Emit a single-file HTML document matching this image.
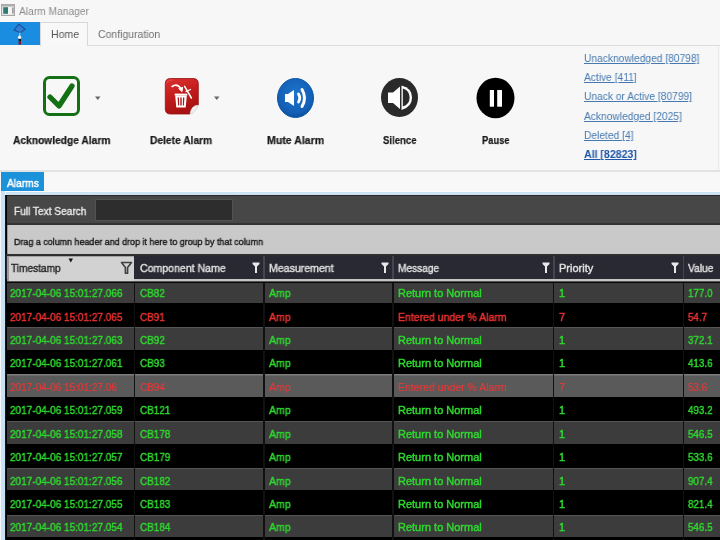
<!DOCTYPE html>
<html><head><meta charset="utf-8">
<style>
*{margin:0;padding:0;box-sizing:border-box}
html,body{width:720px;height:540px;overflow:hidden;background:#f7f7f7;font-family:"Liberation Sans",sans-serif}
.a{position:absolute;white-space:nowrap}
.t{position:absolute;white-space:nowrap;transform-origin:0 0;will-change:transform}
#title{left:19px;top:4.5px;font-size:11px;color:#8c8c8c;transform:scaleX(0.93)}
#tabbar .blue{position:absolute;left:0;top:22px;width:40px;height:22.6px;background:#1a8de0}
#home{position:absolute;left:40px;top:22px;width:48px;height:24px;border:1px solid #d8d8d8;border-bottom:none;background:#f8f8f8}
#tabline{position:absolute;left:88px;top:45px;width:632px;height:1px;background:#dcdcdc}
.lbl{font-size:11px;font-weight:bold;color:#1a1a1a;-webkit-text-stroke:0.25px #1a1a1a}
.link{font-size:11px;color:#4679b0;text-decoration:underline}
#ribbonline{position:absolute;left:0;top:169.5px;width:720px;height:2.2px;background:#e3e3e3}
#alarmsTab{position:absolute;left:1px;top:172px;width:43.3px;height:19px;background:#1c92da;color:#fff;font-size:11px}
#tabstrip{position:absolute;left:0;top:171.7px;width:720px;height:20.3px;background:#f8f8f8}
#bluebar{position:absolute;left:0;top:191px;width:720px;height:4px;background:#cbe3f3;border-top:1px solid #fdfdfd}
#bluel{position:absolute;left:0.8px;top:191px;width:4px;height:349px;background:#c9e1f2}
#grid{position:absolute;left:5.4px;top:195px;width:715px;height:345px;background:#000;border-left:1.6px solid #161616}
#gline{position:absolute;left:6px;top:253.8px;width:714px;height:2.2px;background:#2e2e2e}
#search{position:absolute;left:6.8px;top:195px;width:714px;height:30.3px;background:#474747;border-top:1.5px solid #2a2a2a;border-bottom:2px solid #333}
#input{position:absolute;left:95.2px;top:199px;width:138px;height:22px;background:#2d2d2d;border:1px solid #525252}
#group{position:absolute;left:6.6px;border-left:1px solid #999;top:225.3px;width:714px;height:28.5px;background:#c9c9c9}
#hdr{position:absolute;left:6px;top:256px;width:714px;height:22.7px;background:#292934}
#hdrline{position:absolute;left:134px;top:278.7px;width:586px;height:2.8px;background:#c4c4c4}
#tsh{position:absolute;left:7px;top:256px;width:127.3px;height:26px;background:#d2d2d2;border-left:2px solid #9a9a9a;border-top:1.5px solid #a4a4a4;border-bottom:1.8px solid #7a7a7a}
.hd{font-size:11px;color:#e0e0e0;-webkit-text-stroke:0.4px currentColor}
.row{position:absolute;left:7px;width:714px;height:22.4px}
.row .c{position:absolute;top:6.6px;font-size:11px;white-space:nowrap;transform-origin:0 0;margin-left:-7px;-webkit-text-stroke:0.45px currentColor;will-change:transform}
.odd{background:#3c3c3c;box-shadow:inset 0 1px 0 #555}
.even{background:#000}
.sel{background:#5a5a5a;box-shadow:inset 0 1.5px 0 #7c7c7c}
.sel.r{color:#ee3636}
.sel .c{-webkit-text-stroke:0.15px currentColor}
.g{color:#2ed82e}
.r{color:#ea3030}
.vsep{position:absolute;top:281.5px;width:1.6px;height:259px;background:#111}
.hsep{position:absolute;top:256px;width:1.6px;height:22.7px;background:#45454f}
</style></head><body>
<!-- title bar -->
<svg class="a" style="left:1px;top:4px" width="14" height="12" viewBox="0 0 14 12">
<rect x="0.6" y="0.6" width="12.8" height="10.8" fill="#f4f4f4" stroke="#a8a8a8" stroke-width="1.2"/>
<rect x="0.6" y="0.6" width="12.8" height="2" fill="#b0b0b0"/>
<rect x="2.2" y="3.2" width="4.8" height="6.6" fill="#2e7a70"/>
<rect x="11" y="3.5" width="1.6" height="6" fill="#9a9a9a"/>
</svg>
<div class="t" id="title">Alarm Manager</div>
<div id="tabbar"><div class="blue"></div></div>
<svg class="a" style="left:12px;top:23px" width="16" height="22" viewBox="0 0 16 22">
<path d="M6.75 1.2 L13.2 6.2 L8.4 9.7 L2 7 Z" fill="#2f7fd8" stroke="#1d4f90" stroke-width="1.1"/>
<path d="M8 9.5 L7.6 13" stroke="#b8d4f0" stroke-width="1"/>
<circle cx="7.6" cy="14.3" r="1.7" fill="#f2f2f2"/>
<rect x="6.6" y="16" width="2.4" height="2.6" fill="#1a1010"/>
<rect x="6.6" y="18.6" width="2.4" height="3" fill="#8a1a1a"/>
</svg>
<div id="home"></div>
<div id="tabline"></div>
<div class="t" style="left:50.5px;top:27.5px;font-size:11px;color:#555;transform:scaleX(0.96)">Home</div>
<div class="t" style="left:97.5px;top:27.5px;font-size:11px;color:#707070;transform:scaleX(0.95)">Configuration</div>

<!-- ribbon buttons -->
<svg class="a" style="left:42px;top:75px" width="40" height="42" viewBox="0 0 40 42">
<rect x="2.5" y="2.5" width="34" height="37" rx="5" fill="#f7f7f7" stroke="#147014" stroke-width="3"/>
<path d="M8 22 L17 31 L30 11" fill="none" stroke="#147014" stroke-width="5.3" stroke-linecap="round" stroke-linejoin="round"/>
</svg>
<svg class="a" style="left:94px;top:96px" width="8" height="5"><path d="M1 0.5 L6.5 0.5 L3.75 4 Z" fill="#666"/></svg>
<div class="t lbl" style="left:13px;top:134px;transform:scaleX(0.93)">Acknowledge Alarm</div>

<svg class="a" style="left:164px;top:77px" width="36" height="39" viewBox="0 0 36 39">
<defs><linearGradient id="rg" x1="0" y1="0" x2="0.3" y2="1"><stop offset="0" stop-color="#dc3030"/><stop offset="0.5" stop-color="#c41c1c"/><stop offset="1" stop-color="#a81212"/></linearGradient></defs>
<path d="M6.5 1.5 H29 Q34.3 1.5 34.3 6.5 V28 Q27 28.5 26 37 H6.5 Q1.3 37 1.3 32 V6.5 Q1.3 1.5 6.5 1.5 Z" fill="url(#rg)" stroke="#981010" stroke-width="0.8"/>
<path d="M34.3 28 Q27 28.5 26 37 Q31 36.5 34.3 28 Z" fill="#f0f0f0" stroke="#c8c8c8" stroke-width="0.6"/>
<path d="M10.7 16.6 H23.3 V18.6 H10.7 Z" fill="#fff"/>
<path d="M11.2 18.6 H22.8 L21.7 30.6 H12.3 Z" fill="#fff"/>
<path d="M13.6 20.5 H15 L15.2 28.6 H14.1 Z M16.3 20.5 H17.7 V28.6 H16.3 Z M19 20.5 H20.4 L19.9 28.6 H18.8 Z" fill="#b01818"/>
<path d="M8.2 9.4 Q13 6 17 11.5" fill="none" stroke="#fff" stroke-width="1.8" stroke-linecap="round"/>
<path d="M14.6 11.6 L18 14.6 L18.6 10" fill="#fff" stroke="#fff" stroke-width="1" stroke-linejoin="round"/>
<path d="M20.6 9.4 L27.4 21" stroke="#fff" stroke-width="1.5" stroke-linecap="round"/>
<path d="M22 14.5 L26.5 12.5" stroke="#fff" stroke-width="1.3" stroke-linecap="round"/>
<path d="M3 6 Q4 3 8 2.8" fill="none" stroke="#f07070" stroke-width="0.8" opacity="0.6"/>
</svg>
<svg class="a" style="left:213px;top:96px" width="8" height="5"><path d="M1 0.5 L6.5 0.5 L3.75 4 Z" fill="#666"/></svg>
<div class="t lbl" style="left:150px;top:134px;transform:scaleX(0.93)">Delete Alarm</div>

<svg class="a" style="left:276px;top:78px" width="39" height="41" viewBox="0 0 39 41">
<defs><radialGradient id="bg" cx="0.5" cy="0.4" r="0.6"><stop offset="0" stop-color="#1f74cc"/><stop offset="0.8" stop-color="#135fb5"/><stop offset="1" stop-color="#0c4f9c"/></radialGradient></defs>
<ellipse cx="19.5" cy="20" rx="18" ry="19.5" fill="url(#bg)" stroke="#0e58a8" stroke-width="1"/>
<path d="M9 16 H12 L18 12 V28 L12 24 H9 Z" fill="#fff"/>
<path d="M22.5 16 Q25 20 22.5 24" fill="none" stroke="#fff" stroke-width="2.8" stroke-linecap="round"/>
<path d="M26 11.5 Q31 20 26 28.5" fill="none" stroke="#fff" stroke-width="3" stroke-linecap="round"/>
</svg>
<div class="t lbl" style="left:266.5px;top:134px;transform:scaleX(0.96)">Mute Alarm</div>

<svg class="a" style="left:380px;top:77px" width="39" height="41" viewBox="0 0 39 41">
<ellipse cx="19.5" cy="20.5" rx="18.5" ry="19.5" fill="#2a2a2a"/>
<path d="M8 15.5 H13 L20 9.5 V32 L13 26 H8 Z" fill="#fff"/>
<path d="M21.5 8.5 Q32 11 32 20.5 Q32 30 21.5 33 Z" fill="#fff"/>
<path d="M22.8 11.5 Q29.6 13.5 29.6 20.5 Q29.6 27.5 22.8 29.5 Z" fill="#2a2a2a"/>
</svg>
<div class="t lbl" style="left:382.5px;top:134px;transform:scaleX(0.87)">Silence</div>

<svg class="a" style="left:476px;top:77px" width="40" height="43" viewBox="0 0 40 43">
<ellipse cx="19.5" cy="21" rx="19" ry="20.3" fill="#000"/>
<rect x="13.8" y="13" width="4.2" height="16.7" fill="#fff"/>
<rect x="21.2" y="13" width="4.8" height="16.7" fill="#fff"/>
</svg>
<div class="t lbl" style="left:481.5px;top:134px;transform:scaleX(0.85)">Pause</div>

<div class="t link" style="left:584px;top:51.5px;transform:scaleX(0.93)">Unacknowledged [80798]</div>
<div class="t link" style="left:584px;top:70.7px;transform:scaleX(0.93)">Active [411]</div>
<div class="t link" style="left:584px;top:90px;transform:scaleX(0.93)">Unack or Active [80799]</div>
<div class="t link" style="left:584px;top:109.5px;transform:scaleX(0.93)">Acknowledged [2025]</div>
<div class="t link" style="left:584px;top:129.2px;transform:scaleX(0.93)">Deleted [4]</div>
<div class="t link" style="left:584px;top:148.1px;transform:scaleX(0.96);font-weight:bold;color:#1d56a8">All [82823]</div>

<div class="a" style="left:718px;top:46px;width:1px;height:124px;background:#e9e9e9"></div>
<div id="ribbonline"></div>
<div id="tabstrip"></div>
<div id="alarmsTab"><span class="t" style="left:5.5px;top:4.8px;transform:scaleX(0.93);-webkit-text-stroke:0.45px #fff">Alarms</span></div>
<div id="bluebar"></div>
<div id="bluel"></div>
<div class="a" style="left:4.6px;top:191px;width:0.8px;height:349px;background:#f4f8fb"></div><div class="a" style="left:0;top:191px;width:0.8px;height:349px;background:#f4f8fb"></div>
<div id="grid"></div>
<div id="search"></div>
<div class="t" style="left:13.5px;top:205px;font-size:11px;color:#e8e8e8;transform:scaleX(0.92);-webkit-text-stroke:0.4px #e8e8e8">Full Text Search</div>
<div id="input"></div>
<div id="group"></div>
<div class="t" style="left:13.5px;top:236px;font-size:9.6px;color:#1a1a1a;transform:scaleX(0.93);-webkit-text-stroke:0.4px #1a1a1a">Drag a column header and drop it here to group by that column</div>
<div id="gline"></div>
<div id="hdr"></div>
<div id="hdrline"></div>
<div id="tsh"></div>
<div class="t hd" style="left:11px;top:262px;color:#262626;transform:scaleX(0.92)">Timestamp</div>
<svg class="a" style="left:68px;top:258px" width="6" height="6"><path d="M0.5 0.5 H5 L2.75 4.5Z" fill="#111"/></svg>
<svg class="a" style="left:120px;top:261px" width="13" height="14" viewBox="0 0 13 14"><path d="M1.5 1.5 H11.5 L7.6 6.5 V12.3 H5.4 V6.5 Z" fill="none" stroke="#404040" stroke-width="1.6" stroke-linejoin="round"/></svg>
<div class="t hd" style="left:139.5px;top:262px;transform:scaleX(0.96)">Component Name</div>
<div class="t hd" style="left:269px;top:262px;transform:scaleX(0.96)">Measurement</div>
<div class="t hd" style="left:398px;top:262px;transform:scaleX(0.92)">Message</div>
<div class="t hd" style="left:558.5px;top:262px;transform:scaleX(1.0)">Priority</div>
<div class="t hd" style="left:687.5px;top:262px;transform:scaleX(0.93)">Value</div>
<div id="rows">
<div class="row odd g" style="top:280.56px"><span class="c" style="left:10px;transform:scaleX(0.91)">2017-04-06 15:01:27.066</span><span class="c" style="left:139.5px;transform:scaleX(0.9)">CB82</span><span class="c" style="left:269px;transform:scaleX(0.96)">Amp</span><span class="c" style="left:398px;transform:scaleX(1.0)">Return to Normal</span><span class="c" style="left:558.5px;transform:scaleX(1.0)">1</span><span class="c" style="left:687.5px;transform:scaleX(0.89)">177.0</span></div>
<div class="row even r" style="top:303.99px"><span class="c" style="left:10px;transform:scaleX(0.91)">2017-04-06 15:01:27.065</span><span class="c" style="left:139.5px;transform:scaleX(0.9)">CB91</span><span class="c" style="left:269px;transform:scaleX(0.96)">Amp</span><span class="c" style="left:398px;transform:scaleX(0.955)">Entered under % Alarm</span><span class="c" style="left:558.5px;transform:scaleX(1.0)">7</span><span class="c" style="left:687.5px;transform:scaleX(0.89)">54.7</span></div>
<div class="row odd g" style="top:327.42px"><span class="c" style="left:10px;transform:scaleX(0.91)">2017-04-06 15:01:27.063</span><span class="c" style="left:139.5px;transform:scaleX(0.9)">CB92</span><span class="c" style="left:269px;transform:scaleX(0.96)">Amp</span><span class="c" style="left:398px;transform:scaleX(1.0)">Return to Normal</span><span class="c" style="left:558.5px;transform:scaleX(1.0)">1</span><span class="c" style="left:687.5px;transform:scaleX(0.89)">372.1</span></div>
<div class="row even g" style="top:350.85px"><span class="c" style="left:10px;transform:scaleX(0.91)">2017-04-06 15:01:27.061</span><span class="c" style="left:139.5px;transform:scaleX(0.9)">CB93</span><span class="c" style="left:269px;transform:scaleX(0.96)">Amp</span><span class="c" style="left:398px;transform:scaleX(1.0)">Return to Normal</span><span class="c" style="left:558.5px;transform:scaleX(1.0)">1</span><span class="c" style="left:687.5px;transform:scaleX(0.89)">413.6</span></div>
<div class="row sel r" style="top:374.28px"><span class="c" style="left:10px;transform:scaleX(0.91)">2017-04-06 15:01:27.06</span><span class="c" style="left:139.5px;transform:scaleX(0.9)">CB94</span><span class="c" style="left:269px;transform:scaleX(0.96)">Amp</span><span class="c" style="left:398px;transform:scaleX(0.955)">Entered under % Alarm</span><span class="c" style="left:558.5px;transform:scaleX(1.0)">7</span><span class="c" style="left:687.5px;transform:scaleX(0.89)">53.6</span></div>
<div class="row even g" style="top:397.71px"><span class="c" style="left:10px;transform:scaleX(0.91)">2017-04-06 15:01:27.059</span><span class="c" style="left:139.5px;transform:scaleX(0.9)">CB121</span><span class="c" style="left:269px;transform:scaleX(0.96)">Amp</span><span class="c" style="left:398px;transform:scaleX(1.0)">Return to Normal</span><span class="c" style="left:558.5px;transform:scaleX(1.0)">1</span><span class="c" style="left:687.5px;transform:scaleX(0.89)">493.2</span></div>
<div class="row odd g" style="top:421.14px"><span class="c" style="left:10px;transform:scaleX(0.91)">2017-04-06 15:01:27.058</span><span class="c" style="left:139.5px;transform:scaleX(0.9)">CB178</span><span class="c" style="left:269px;transform:scaleX(0.96)">Amp</span><span class="c" style="left:398px;transform:scaleX(1.0)">Return to Normal</span><span class="c" style="left:558.5px;transform:scaleX(1.0)">1</span><span class="c" style="left:687.5px;transform:scaleX(0.89)">546.5</span></div>
<div class="row even g" style="top:444.57px"><span class="c" style="left:10px;transform:scaleX(0.91)">2017-04-06 15:01:27.057</span><span class="c" style="left:139.5px;transform:scaleX(0.9)">CB179</span><span class="c" style="left:269px;transform:scaleX(0.96)">Amp</span><span class="c" style="left:398px;transform:scaleX(1.0)">Return to Normal</span><span class="c" style="left:558.5px;transform:scaleX(1.0)">1</span><span class="c" style="left:687.5px;transform:scaleX(0.89)">533.6</span></div>
<div class="row odd g" style="top:468.00px"><span class="c" style="left:10px;transform:scaleX(0.91)">2017-04-06 15:01:27.056</span><span class="c" style="left:139.5px;transform:scaleX(0.9)">CB182</span><span class="c" style="left:269px;transform:scaleX(0.96)">Amp</span><span class="c" style="left:398px;transform:scaleX(1.0)">Return to Normal</span><span class="c" style="left:558.5px;transform:scaleX(1.0)">1</span><span class="c" style="left:687.5px;transform:scaleX(0.89)">907.4</span></div>
<div class="row even g" style="top:491.43px"><span class="c" style="left:10px;transform:scaleX(0.91)">2017-04-06 15:01:27.055</span><span class="c" style="left:139.5px;transform:scaleX(0.9)">CB183</span><span class="c" style="left:269px;transform:scaleX(0.96)">Amp</span><span class="c" style="left:398px;transform:scaleX(1.0)">Return to Normal</span><span class="c" style="left:558.5px;transform:scaleX(1.0)">1</span><span class="c" style="left:687.5px;transform:scaleX(0.89)">821.4</span></div>
<div class="row odd g" style="top:514.86px"><span class="c" style="left:10px;transform:scaleX(0.91)">2017-04-06 15:01:27.054</span><span class="c" style="left:139.5px;transform:scaleX(0.9)">CB184</span><span class="c" style="left:269px;transform:scaleX(0.96)">Amp</span><span class="c" style="left:398px;transform:scaleX(1.0)">Return to Normal</span><span class="c" style="left:558.5px;transform:scaleX(1.0)">1</span><span class="c" style="left:687.5px;transform:scaleX(0.89)">546.5</span></div>
</div>
<div class="vsep" style="left:133.8px"></div><div class="vsep" style="left:263px"></div><div class="vsep" style="left:392px"></div><div class="vsep" style="left:552.8px"></div><div class="vsep" style="left:682.6px"></div><div class="hsep" style="left:263.2px"></div><div class="hsep" style="left:392.2px"></div><div class="hsep" style="left:553.0px"></div><div class="hsep" style="left:682.8000000000001px"></div>
<div class="a" style="left:6px;top:281.5px;width:714px;height:1.8px;background:#080808"></div>
<svg class="a" style="left:251.5px;top:262px" width="8" height="12" viewBox="0 0 8 12"><path d="M0.5 0.5 H7.5 V2 L5 4.5 V11 H3 V4.5 L0.5 2 Z" fill="#e8e8e8"/></svg><svg class="a" style="left:381px;top:262px" width="8" height="12" viewBox="0 0 8 12"><path d="M0.5 0.5 H7.5 V2 L5 4.5 V11 H3 V4.5 L0.5 2 Z" fill="#e8e8e8"/></svg><svg class="a" style="left:541.5px;top:262px" width="8" height="12" viewBox="0 0 8 12"><path d="M0.5 0.5 H7.5 V2 L5 4.5 V11 H3 V4.5 L0.5 2 Z" fill="#e8e8e8"/></svg><svg class="a" style="left:670.5px;top:262px" width="8" height="12" viewBox="0 0 8 12"><path d="M0.5 0.5 H7.5 V2 L5 4.5 V11 H3 V4.5 L0.5 2 Z" fill="#e8e8e8"/></svg>
</body></html>
